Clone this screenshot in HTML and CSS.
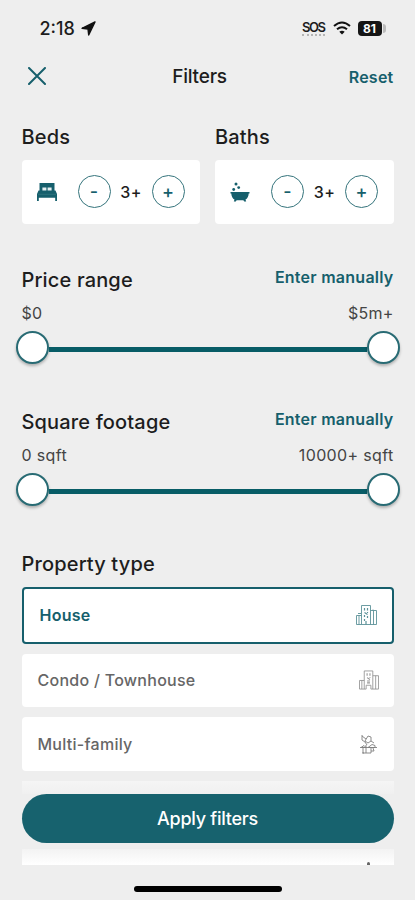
FILE: index.html
```html
<!DOCTYPE html>
<html lang="en">
<head>
<meta charset="utf-8">
<meta name="viewport" content="width=device-width">
<title>Filters</title>
<link rel="stylesheet" href="styles.css">
</head>
<body>
<div class="screen">
  <div class="status">
    <div class="status-left">
      <span class="time">2:18</span>
      <svg width="15" height="15" viewBox="0 0 15 15"><path d="M14 1 1 7.3l6 .7.7 6z" fill="#111" stroke="#111" stroke-width="1.4" stroke-linejoin="round"/></svg>
    </div>
    <div class="status-right">
      <span class="sos">SOS</span>
      <svg class="wifi" width="18" height="14" viewBox="0 0 18 14" fill="none" stroke="#111" stroke-width="2"><path d="M1 5Q9-2 17 5M4 8.3q5-4.2 10 0"/><path d="M9 13.5 6.3 10.8q2.7-2.2 5.4 0z" fill="#111" stroke="none"/></svg>
      <span class="battery">81</span><span class="battery-tip"></span>
    </div>
  </div>

  <header class="header">
    <svg class="close" width="18" height="18" viewBox="0 0 18 18" fill="none" stroke="#165f6c" stroke-width="2" stroke-linecap="round"><path d="M1 1l16 16M17 1 1 17"/></svg>
    <h1>Filters</h1>
    <a class="link">Reset</a>
  </header>

  <section class="counters">
    <div class="counter">
      <h2>Beds</h2>
      <div class="stepper">
        <svg class="glyph" width="20" height="18" viewBox="0 0 20 18" fill="#165f6c"><path d="M2.500 0h15v8h-15z"/><path d="M5.400 4.500h4V8h-4zM10.600 4.500h4V8h-4z" fill="#e4eff1"/><path d="M1.500 7.500h17L20 11v7h-1.800v-3.200H1.800V18H0v-7z"/><path d="M1 11.300h18" stroke="#3d7d88" stroke-width=".6"/></svg>
        <span class="round minus">-</span><span class="count">3+</span><span class="round">+</span>
      </div>
    </div>
    <div class="counter">
      <h2>Baths</h2>
      <div class="stepper">
        <svg class="glyph" width="20" height="20" viewBox="0 0 20 20" fill="#165f6c"><circle cx="6" cy="2" r="1.500"/><circle cx="8.700" cy="5.600" r="1.400"/><circle cx="3.700" cy="7.500" r="1.400"/><path d="M.5 10h19v1.500h-.8c-.1 3-1.400 5.200-3.200 6.100l.7 1.900h-2l-.8-1.300H6.600l-.8 1.300h-2l.7-1.900c-1.800-.9-3.100-3.100-3.200-6.100H.5z"/></svg>
        <span class="round minus">-</span><span class="count">3+</span><span class="round">+</span>
      </div>
    </div>
  </section>

  <section class="range">
    <div class="range-head"><h2>Price range</h2><a class="link">Enter manually</a></div>
    <div class="range-values"><span>$0</span><span>$5m+</span></div>
    <div class="slider"><i class="thumb"></i><i class="track"></i><i class="thumb"></i></div>
  </section>

  <section class="range">
    <div class="range-head"><h2>Square footage</h2><a class="link">Enter manually</a></div>
    <div class="range-values sqft"><span>0 sqft</span><span>10000+ sqft</span></div>
    <div class="slider"><i class="thumb"></i><i class="track"></i><i class="thumb"></i></div>
  </section>

  <section class="types">
    <h2>Property type</h2>
    <div class="option selected"><span>House</span>
      <svg width="21" height="20" viewBox="0 0 21 20" fill="none" stroke="#5c9299"><path d="M5.500 19.500V.5h9v19M5.500 10.500h-5v9h20v-14h-6M2 8.500h3M17 5.500v-1M3 10.500v9M17.500 5.500v14" stroke-width=".9"/><path d="M8.500 3v2.500M11.500 3v2.500M8.500 7.500l3 2M11.500 7v1M8.500 10v2M11.500 11v2M8.500 14v2M10 16v3.500" stroke-width="1.200"/></svg>
    </div>
    <div class="option"><span>Condo / Townhouse</span>
      <svg width="20" height="20" viewBox="0 0 21 20" fill="none" stroke="#929292"><path d="M5.500 19.500V.5h9v19M5.500 10.500h-5v9h7v-4h5v4h8v-14h-6M3 10.500v9M17.500 5.500v14" stroke-width=".9"/><path d="M8.500 3v2.500M11.500 3v2.500M8.500 7.500l3 2M11.500 7v1M8.500 11h3M8.500 13h3" stroke-width="1.100"/></svg>
    </div>
    <div class="option"><span>Multi-family</span>
      <svg class="plant" width="17" height="20" viewBox="0 0 17 20" fill="none" stroke="#808080"><path d="M2 1v5l3 2M2 2l4 3M5 7l3-5 3 1v4l-3 2-3-2M5 8l2 3M11 7l3 2M1 13.500l3-2 2 2zM8 13.500l4-3 3 1v2zM0 13.500h17M3 14v5h8v-5M6 11v8M13 14l1 3h-3M2 19h2" stroke-width=".9"/></svg>
    </div>
  </section>

  <footer class="footer">
    <div class="faded-top"></div>
    <button class="apply">Apply filters</button>
    <div class="faded-bottom"><i></i></div>
    <div class="home"></div>
  </footer>
</div>
</body>
</html>
```
FILE: styles.css
```css
* { box-sizing: border-box; }
body { margin: 0; background: #eee; color: #1d1d1d; font-family: Inter, "Liberation Sans", sans-serif; }
.screen { width: 415px; height: 900px; overflow: hidden; display: flex; flex-direction: column; padding: 0 21.500px; }
h1, h2 { margin: 0; font-weight: 500; font-size: 20px; line-height: 24px; letter-spacing: .15px; }
h1 { font-size: 19px; text-align: center; letter-spacing: -.2px; }
.link { color: #165f6c; font-size: 16px; font-weight: 600; line-height: 20px; letter-spacing: .25px; text-align: right; }

.status { height: 56px; display: flex; justify-content: space-between; padding: 0 8px 0 18px; align-items: center; }
.status-left, .status-right { display: flex; align-items: center; }
.status-left { gap: 6px; }
.time { font-size: 18px; font-weight: 500; letter-spacing: 0; }
.sos { font-size: 13px; font-weight: 600; line-height: 14px; letter-spacing: -1.500px; border-bottom: 2px dotted #b5b5b5; margin-right: 8px; }
.wifi { margin-right: 7px; }
.battery { width: 24px; height: 15px; border-radius: 4px; background: #151515; color: #fff; font-size: 12px; line-height: 15px; font-weight: 700; text-align: center; }
.battery-tip { width: 3px; height: 9px; margin-left: 1px; border-radius: 0 3px 3px 0; background: #bbb; }

.header { height: 42px; display: grid; grid-template-columns: 80px 1fr 80px; align-items: center; }
.close { margin: -2px 0 0 6px; }
.header h1 { margin-left: -16px; }
.header .link { margin-top: -1px; }

.counters { display: flex; gap: 15px; margin-top: 27px; }
.counter { flex: 1; }
.stepper { height: 64px; margin-top: 10.500px; padding: 0 15.500px 0 15px; background: #fff; border-radius: 4px; display: flex; align-items: center; }
.glyph { margin-right: auto; }
.round { width: 33px; height: 33px; border: 1.300px solid #35747c; border-radius: 50%; color: #165f6c; font-size: 18px; font-weight: 500; line-height: 31px; text-align: center; }
.count { width: 41px; text-align: center; font-size: 16px; font-weight: 500; letter-spacing: .3px; }

.range { height: 142px; }
.counters + .range { margin-top: 44px; }
.range-head { display: flex; justify-content: space-between; align-items: flex-start; height: 33px; }
.range-head .link { margin-top: -1px; }
.range-values { display: flex; justify-content: space-between; height: 26px; font-size: 16px; line-height: 24px; color: #444; letter-spacing: .2px; }
.sqft { letter-spacing: .35px; }
.slider { display: flex; align-items: center; height: 33px; margin: 4px -6px 0; }
.thumb { width: 33px; height: 33px; flex: none; border: 2px solid #286b74; border-radius: 50%; background: #fff; box-shadow: 0 2px 3px #0004; }
.track { flex: 1; height: 5px; margin-top: 5px; background: #075c66; }

.types h2 { margin-bottom: 11px; }
.option { height: 53.500px; margin-bottom: 10px; padding: 0 15px 0 16px; background: #fff; border-radius: 4px; display: flex; align-items: center; justify-content: space-between; font-size: 16px; color: #666; font-weight: 500; letter-spacing: .27px; }
.option.selected { height: 57px; border: 2px solid #165f6c; color: #165f6c; font-weight: 600; }
.plant { margin-right: 2px; }

.footer { display: flex; flex-direction: column; }
.faded-top { height: 13px; background: linear-gradient(#f5f5f5, #f0f0f0); }
.apply { height: 49px; border: 0; border-radius: 25px; background: #17626e; color: #fff; font: 500 18px/48px Inter, "Liberation Sans", sans-serif; letter-spacing: -.25px; }
.faded-bottom { height: 16px; margin-top: 6px; display: flex; align-items: flex-end; justify-content: flex-end; padding-right: 24px; background: linear-gradient(#f3f3f3, #fff); }
.faded-bottom i { width: 3px; height: 3px; background: #666; border-radius: 2px 2px 0 0; }
.home { width: 148px; height: 6px; margin: 21px auto 0; border-radius: 3px; background: #000; }
```
